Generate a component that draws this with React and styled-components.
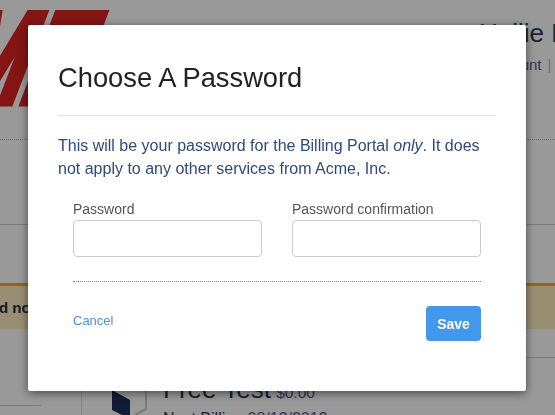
import React from 'react'
import styled, { createGlobalStyle } from 'styled-components'

const GlobalStyle = createGlobalStyle`
  html, body {
    margin: 0;
    padding: 0;
    height: 100%;
    overflow: hidden;
    background: #fff;
    font-family: "Liberation Sans", Arial, sans-serif;
  }
`

const Page = styled.div`
  width: 555px;
  height: 415px;
  overflow: hidden;
  display: flex;
  flex-direction: column;
  background: #fff;
`

const Header = styled.div`
  height: 140px;
  flex: none;
  box-sizing: border-box;
  display: flex;
  border-bottom: 1px dotted #aaa;
  overflow: hidden;
`

const Logo = styled.div`
  width: 464px;
  flex: none;
  overflow: hidden;
  font-size: 130px;
  line-height: 116px;
  font-weight: 700;
  color: #dc2424;
  white-space: nowrap;
`

const LogoMark = styled.span`
  display: inline-block;
  margin-left: -192px;
  letter-spacing: -2px;
  transform-origin: 0 100%;
  transform: skewX(-21deg) scaleX(0.7);
  -webkit-text-stroke: 7px #dc2424;
`

const Account = styled.div`
  padding-top: 18px;
  white-space: nowrap;
`

const UserName = styled.div`
  padding-left: 15px;
  font-size: 26px;
  line-height: 30px;
  color: #2b3b57;
`

const UserLinks = styled.div`
  margin-top: 7px;
  font-size: 15px;
  line-height: 20px;
  color: #4a6289;

  span {
    margin-left: 6px;
    color: #bbb;
  }
`

const Nav = styled.div`
  height: 85px;
  flex: none;
  box-sizing: border-box;
  border-bottom: 1px solid #ccc;
`

const Alert = styled.div`
  margin-top: 58px;
  height: 46px;
  flex: none;
  box-sizing: border-box;
  display: flex;
  align-items: center;
  border-top: 3px solid #f0ae20;
  background: #fdeebf;
  color: #22304a;
  font-size: 15px;
  font-weight: 700;
  white-space: nowrap;
  text-indent: -1px;
`

const Body = styled.div`
  flex: 1;
  display: flex;
`

const Sidebar = styled.div`
  width: 82px;
  flex: none;
  box-sizing: border-box;
  border-right: 1px solid #ddd;
`

const SideItem = styled.div`
  width: 41px;
  height: 77px;
  box-sizing: border-box;
  border-bottom: 1px solid #ccc;
`

const Main = styled.div`
  flex: 1;
`

const MainStrip = styled.div`
  height: 29px;
  box-sizing: border-box;
  border-bottom: 1px solid #ccc;
`

const Plan = styled.div`
  display: flex;
  gap: 15px;
  padding: 15px 0 0 30px;
`

const PlanName = styled.div`
  font-size: 26px;
  line-height: 32px;
  color: #2b3b57;
  white-space: nowrap;

  span {
    margin-left: -2px;
    font-size: 15.5px;
    color: #4a6289;
  }
`

const PlanDate = styled.div`
  font-size: 16px;
  line-height: 20px;
  color: #2b3b57;
  white-space: nowrap;

  span {
    color: #4a6289;
  }
`

const Overlay = styled.div`
  position: fixed;
  inset: 0;
  background: rgba(0, 0, 0, 0.4);
`

const Modal = styled.div`
  position: fixed;
  left: 28px;
  top: 25px;
  width: 498px;
  height: 366px;
  box-sizing: border-box;
  padding: 0 30px;
  background: #fff;
  border-radius: 2px;
  box-shadow: 0 2px 10px rgba(0, 0, 0, 0.55);
`

const ModalHeader = styled.div`
  height: 91px;
  box-sizing: border-box;
  padding-top: 37px;
  border-bottom: 1px solid #ddd;
`

const Title = styled.h1`
  margin: 0;
  font-size: 27.3px;
  line-height: 32px;
  font-weight: 400;
  color: #222;
`

const Intro = styled.p`
  margin: 18px 0 0;
  font-size: 16px;
  line-height: 23px;
  color: #2f4a7a;
`

const Form = styled.form`
  margin: 21px 15px 0;
`

const Fields = styled.div`
  display: grid;
  grid-template-columns: 189px 189px;
  column-gap: 30px;
`

const Field = styled.label`
  display: flex;
  flex-direction: column;
  gap: 2px;
  font-size: 14px;
  line-height: 17px;
  color: #555;
`

const Input = styled.input`
  height: 37px;
  box-sizing: border-box;
  border: 1px solid #ccc;
  border-radius: 4px;
  background: #fff;
  outline: none;
`

const Actions = styled.div`
  margin-top: 24px;
  padding-top: 24px;
  border-top: 1px dotted #888;
  display: flex;
  justify-content: space-between;
  align-items: center;
`

const CancelLink = styled.a`
  margin-bottom: 6px;
  font-size: 13px;
  color: #4a90e2;
  text-decoration: none;
`

const SaveButton = styled.button`
  width: 55px;
  height: 35px;
  padding: 0;
  border: 0;
  border-radius: 4px;
  background: #4299eb;
  color: #fff;
  font-family: inherit;
  font-size: 14px;
  font-weight: 700;
`

const Hexagon = () => (
  <svg width="36" height="46" viewBox="0 0 36 46" style={{ flex: 'none' }}>
    <path d="M20 10 L34 18 V36 L23 42" fill="none" stroke="#ccc" strokeWidth="2" />
    <path d="M0 17 L18 27 V46 L0 37 Z" fill="#1c2f57" />
  </svg>
)

export default function App() {
  return (
    <>
      <GlobalStyle />
      <Page>
        <Header>
          <Logo>
            <LogoMark>ACME</LogoMark>
          </Logo>
          <Account>
            <UserName>Hollie L</UserName>
            <UserLinks>
              My Account<span>|</span>
            </UserLinks>
          </Account>
        </Header>
        <Nav />
        <Alert>d not</Alert>
        <Body>
          <Sidebar>
            <SideItem />
          </Sidebar>
          <Main>
            <MainStrip />
            <Plan>
              <Hexagon />
              <div>
                <PlanName>
                  Free Test <span>$0.00</span>
                </PlanName>
                <PlanDate>
                  Next Billing <span>08/13/2019</span>
                </PlanDate>
              </div>
            </Plan>
          </Main>
        </Body>
      </Page>
      <Overlay />
      <Modal>
        <ModalHeader>
          <Title>Choose A Password</Title>
        </ModalHeader>
        <Intro>
          This will be your password for the Billing Portal <em>only</em>. It does not apply to any
          other services from Acme, Inc.
        </Intro>
        <Form>
          <Fields>
            <Field>
              Password
              <Input type="password" />
            </Field>
            <Field>
              Password confirmation
              <Input type="password" />
            </Field>
          </Fields>
          <Actions>
            <CancelLink href="#">Cancel</CancelLink>
            <SaveButton type="button">Save</SaveButton>
          </Actions>
        </Form>
      </Modal>
    </>
  )
}
